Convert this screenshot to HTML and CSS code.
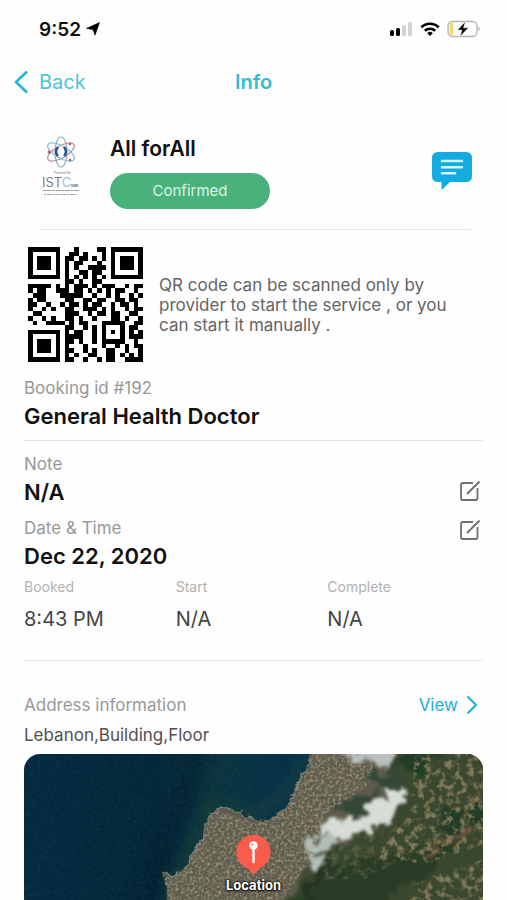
FILE: index.html
```html
<!DOCTYPE html>
<html lang="en">
<head>
    <meta charset="UTF-8">
    <meta name="viewport" content="width=device-width, initial-scale=1.0">
    <title>Info</title>
    <link rel="stylesheet" href="styles.css">
</head>
<body>
    <div class="page">
        <div class="status-bar">
            <div class="status-time">
                <span>9:52</span>
                <svg width="14" height="14" viewBox="0 0 14 14"><path d="M13.5 .5 L9 13.2 L7 7.6 L.4 6.4 Z" fill="#000" stroke="#000" stroke-width=".6"/></svg>
            </div>
            <div class="status-icons">
                <svg width="24" height="16" viewBox="0 0 24 16">
                    <rect x="1" y="9" width="4" height="6" rx="1.5"/>
                    <rect x="7" y="7" width="4" height="8" rx="1.5"/>
                    <rect x="13" y="4" width="4" height="11" rx="1.5" fill="#d2d2d2"/>
                    <rect x="19" y="1" width="4" height="14" rx="1.5" fill="#d2d2d2"/>
                </svg>
                <svg width="20" height="16" viewBox="0 0 20 16" fill="none" stroke="#000" stroke-width="2.6">
                    <path d="M1.3 6.2 A12.5 12.5 0 0 1 18.7 6.2"/>
                    <path d="M4.8 9.8 A7.5 7.5 0 0 1 15.2 9.8"/>
                    <path d="M10 15 L7.2 12.2 A4 4 0 0 1 12.8 12.2 Z" fill="#000" stroke="none"/>
                </svg>
                <svg width="34" height="18" viewBox="0 0 34 18">
                    <rect x="1" y="1.5" width="29" height="15" rx="4.5" fill="#fff" stroke="#b4b4b4" stroke-width="1.3"/>
                    <path d="M6 3 V15 H5 A2.5 2.5 0 0 1 2.5 12.5 V5.5 A2.5 2.5 0 0 1 5 3 Z" fill="#f0dc6e"/>
                    <path d="M31.5 6.5 Q34 9 31.5 11.5 Z" fill="#a8a8a8"/>
                    <path d="M18.5 1.5 L10.5 10 H15 L13 16.5 L21.5 7.8 H16.5 Z" fill="#000" stroke="#fff" stroke-width=".5"/>
                </svg>
            </div>
        </div>

        <nav class="nav-bar">
            <a class="back" href="#">
                <svg width="15" height="24" viewBox="0 0 15 24"><path d="M13 1.5 L2 12 L13 22.5" fill="none" stroke="#22b8d3" stroke-width="2.6"/></svg>
                Back
            </a>
            <h1>Info</h1>
        </nav>

        <header class="provider">
            <svg class="logo" width="38" height="62" viewBox="0 0 38 62">
                <g fill="none" stroke-width="1.2">
                    <ellipse cx="19" cy="16" rx="6" ry="15" stroke="#8aa9c4"/>
                    <ellipse cx="19" cy="16" rx="6" ry="15" stroke="#b7889f" transform="rotate(60 19 16)"/>
                    <ellipse cx="19" cy="16" rx="6" ry="15" stroke="#7fbdcc" transform="rotate(120 19 16)"/>
                    <path d="M16 11 Q12 16 16 20 M22 11 Q26 16 22 20" stroke="#244c91" stroke-width="2.4"/>
                </g>
                <g fill="#c94b60"><circle cx="7" cy="16" r="1.5"/><circle cx="28" cy="8" r="1.3"/><circle cx="28" cy="24" r="1.3"/></g>
                <text x="12" y="38" font-size="3" fill="#777">Powered By</text>
                <text x="0" y="51" font-size="13" fill="#7c7f88">IST<tspan fill="#9ec5d0">C</tspan></text>
                <text x="29" y="51" font-size="3" font-weight="700" fill="#555">SARL</text>
                <path d="M1 54.5 H37" stroke="#9a9aa2" stroke-width="1.2" stroke-dasharray="3 .6 5 .6"/>
                <path d="M2 58.5 H36" stroke="#a5a5ac" stroke-dasharray="2 1 4 .7"/>
            </svg>
            <div class="provider-info">
                <h2>All forAll</h2>
                <span class="status">Confirmed</span>
            </div>
            <button class="chat" aria-label="Chat">
                <svg width="42" height="40" viewBox="0 0 42 40">
                    <path d="M7 1 H35 Q41 1 41 7 V25 Q41 31 35 31 H19 L10.5 39 V31 H7 Q1 31 1 25 V7 Q1 1 7 1 Z" fill="#14acdf"/>
                    <path d="M11 10 H31 M11 16.2 H31 M11 22.3 H24" stroke="#d5f4fc" stroke-width="2.6" stroke-linecap="round"/>
                </svg>
            </button>
        </header>

        <section class="qr-row">
            <svg id="qr" width="115" height="115" viewBox="0 0 25 25" shape-rendering="crispEdges"></svg>
            <p>QR code can be scanned only by provider to start the service , or you can start it manually .</p>
        </section>

        <section class="booking">
            <p class="label">Booking id #192</p>
            <p class="value">General Health Doctor</p>
        </section>

        <section class="details">
            <div class="field">
                <div>
                    <p class="label">Note</p>
                    <p class="value">N/A</p>
                </div>
                <button class="edit edit-low" aria-label="Edit note">
                    <svg width="22" height="22" viewBox="0 0 22 22" fill="none" stroke="#707070" stroke-width="1.8"><path d="M14 3 H4 Q2 3 2 5 V18 Q2 20 4 20 H16.5 Q18.5 20 18.5 18 V8"/><path d="M8 14 L20.5 1.5" stroke-width="2"/></svg>
                </button>
            </div>
            <div class="field">
                <div>
                    <p class="label">Date &amp; Time</p>
                    <p class="value">Dec 22, 2020</p>
                </div>
                <button class="edit" aria-label="Edit date and time">
                    <svg width="22" height="22" viewBox="0 0 22 22" fill="none" stroke="#707070" stroke-width="1.8"><path d="M14 3 H4 Q2 3 2 5 V18 Q2 20 4 20 H16.5 Q18.5 20 18.5 18 V8"/><path d="M8 14 L20.5 1.5" stroke-width="2"/></svg>
                </button>
            </div>
            <dl class="times">
                <div><dt>Booked</dt><dd>8:43 PM</dd></div>
                <div><dt>Start</dt><dd>N/A</dd></div>
                <div><dt>Complete</dt><dd>N/A</dd></div>
            </dl>
        </section>

        <section class="address">
            <div class="address-head">
                <p class="label">Address information</p>
                <a class="view" href="#">View
                    <svg width="12" height="20" viewBox="0 0 12 20"><path d="M1.5 1.5 L10 10 L1.5 18.5" fill="none" stroke="#1eaed0" stroke-width="2"/></svg>
                </a>
            </div>
            <p class="address-text">Lebanon,Building,Floor</p>
        </section>

        <div class="map">
            <svg class="map-image" viewBox="0 0 458 146" preserveAspectRatio="xMidYMin slice" color-interpolation-filters="sRGB">
                <defs>
                    <linearGradient id="sea" x2="1">
                        <stop offset="0" stop-color="#052a40"/>
                        <stop offset=".28" stop-color="#04263a"/>
                        <stop offset=".42" stop-color="#0b343f"/>
                        <stop offset=".58" stop-color="#06304a"/>
                    </linearGradient>
                    <filter id="rough" x="-10%" y="-10%" width="120%" height="120%">
                        <feTurbulence type="fractalNoise" baseFrequency=".13" numOctaves="3" seed="4"/>
                        <feDisplacementMap in="SourceGraphic" scale="9" xChannelSelector="R" yChannelSelector="G"/>
                    </filter>
                    <filter id="patch" x="-20%" y="-20%" width="140%" height="140%">
                        <feTurbulence type="fractalNoise" baseFrequency=".07" numOctaves="4" seed="9"/>
                        <feDisplacementMap in="SourceGraphic" scale="26" xChannelSelector="R" yChannelSelector="G"/>
                        <feGaussianBlur stdDeviation="1.5"/>
                    </filter>
                    <filter id="grain" x="0" y="0" width="100%" height="100%">
                        <feTurbulence type="fractalNoise" baseFrequency=".35" numOctaves="3" seed="2"/>
                        <feColorMatrix values="0 0 0 0 .72  0 0 0 0 .68  0 0 0 0 .56  2.4 0 0 0 -1"/>
                        <feGaussianBlur stdDeviation=".5"/>
                        <feComposite in2="SourceGraphic" operator="in"/>
                    </filter>
                    <filter id="fields" x="0" y="0" width="100%" height="100%">
                        <feTurbulence type="fractalNoise" baseFrequency=".14" numOctaves="4" seed="12"/>
                        <feColorMatrix values="0 0 0 0 .60  0 0 0 0 .54  0 0 0 0 .40  4 0 0 0 -1.9"/>
                        <feGaussianBlur stdDeviation=".6"/>
                        <feComposite in2="SourceGraphic" operator="in"/>
                    </filter>
                    <filter id="seaGrain" x="0" y="0" width="100%" height="100%">
                        <feTurbulence type="fractalNoise" baseFrequency=".3" numOctaves="2" seed="6"/>
                        <feColorMatrix values="0 0 0 0 .16  0 0 0 0 .32  0 0 0 0 .36  1.5 0 0 0 -.6"/>
                    </filter>
                    <filter id="soft" x="-50%" y="-50%" width="200%" height="200%"><feGaussianBlur stdDeviation="7"/></filter>
                    <path id="land" d="M142 150 L142 134 L138 119 L150 121 L163 110 L168 97 L178 87 L179 75 L186 59 L196 53 L216 58 L229 68 L246 66 L261 56 L268 43 L276 23 L284 12 L288 -6 H464 V152 Z"/>
                    <clipPath id="landClip"><use href="#land"/></clipPath>
                </defs>
                <rect width="458" height="146" fill="url(#sea)"/>
                <path d="M175 -5 L120 150" stroke="#03202f" stroke-width="22" filter="url(#soft)" opacity=".6"/>
                <path d="M142 150 L163 100 L186 50 L230 60 L262 40 L284 0" fill="none" stroke="#1c4238" stroke-width="10" filter="url(#soft)" opacity=".8"/>
                <rect width="458" height="146" filter="url(#seaGrain)" opacity=".35"/>
                <use href="#land" fill="#5f5c4e" filter="url(#rough)"/>
                <g clip-path="url(#landClip)">
                    <path d="M368 -10 H475 V160 H255 L285 116 L318 92 L350 74 L380 50 L364 20 Z" fill="#3a482f" filter="url(#patch)"/>
                    <path d="M310 50 L350 38 L354 50 L324 66 Z M340 22 L376 20 L374 34 L345 32 Z" fill="#344838" filter="url(#patch)"/>
                    <path d="M270 150 L300 106 L350 108 L404 88 L430 96 L390 124 L350 150 Z" fill="#283c26" filter="url(#patch)"/>
                    <path d="M376 -5 H415 L400 18 L378 22 Z M410 60 L460 44 V72 L425 82 Z" fill="#223d27" filter="url(#patch)"/>
                    <path d="M404 98 L448 72 M450 36 L438 64" stroke="#79583f" stroke-width="5" filter="url(#patch)"/>
                    <path d="M142 150 L138 119 L163 110 L179 80 L190 55 L229 68 L262 56 L288 -6 H350 L345 30 L300 60 L290 100 L255 150 Z" filter="url(#grain)" opacity=".7"/>
                    <path d="M390 0 H458 V90 L400 110 L350 104 L385 60 Z M385 130 L458 105 V146 H385 Z" filter="url(#fields)" opacity=".75"/>
                    <path d="M290 60 H350 L405 90 L340 125 H285 Z" filter="url(#fields)" opacity=".3"/>
                    <path d="M283 146 L296 110 L310 94" fill="none" stroke="#25291f" stroke-width="8" opacity=".55" filter="url(#patch)"/>
                </g>
                <path d="M138 119 L150 121 L163 110 L168 97 L178 87 L179 75 L186 59 L196 53 L216 58 L229 68 M246 66 L261 56 L268 43 L276 23 L286 5" fill="none" stroke="#a19d8b" stroke-width="1.5" opacity=".65" filter="url(#rough)"/>
                <g filter="url(#patch)">
                    <path d="M322 -6 H375 L368 8 L352 15 L343 6 L326 3 Z" fill="#b9c0bd"/>
                    <path d="M360 32 L378 32 L379 54 L366 57 L367 67 L347 70 L340 79 L310 85 L296 80 L300 66 L324 63 L340 60 L348 50 L362 44 Z" fill="#d6ddd6"/>
                    <path d="M279 83 L308 83 L312 93 L282 94 Z M278 98 L305 98 L300 109 L285 111 Z" fill="#b2beb8"/>
                </g>
            </svg>
            <div class="marker">
                <svg width="36" height="42" viewBox="0 0 36 42">
                    <path d="M18 1 A17 17 0 0 1 25.5 33.3 Q21.5 35.5 18 41 Q14.5 35.5 10.5 33.3 A17 17 0 0 1 18 1 Z" fill="#fb5b4b"/>
                    <path d="M18 14 V28" stroke="#fff" stroke-width="2.4" stroke-linecap="round"/>
                    <circle cx="18" cy="11.5" r="4.2" fill="#fff"/>
                    <circle cx="17" cy="10.5" r="1.3" fill="#fb9b8f"/>
                </svg>
                <span>Location</span>
            </div>
        </div>
    </div>
    <script>
        // one string per row of the code, # is a dark module
        const rows = [
            '#######...#....##.#######',
            '#.....#..##.#...#.#.....#',
            '#.###.#.##.##.#.#.#.###.#',
            '#.###.#.#.##...#..#.###.#',
            '#.###.#.#.#..####.#.###.#',
            '#.....#.#..##.##..#.....#',
            '#######.#.#.#.#.#.#######',
            '........##.#..##.........',
            '#####.#.#.###.#.###..#.##',
            '#.##..###.##.#.#.#.##..#.',
            '.###...#####..#..#.#..#.#',
            '#.##....##..##.##..##.##.',
            '##..#..#.##.#.##..#.##.#.',
            '#..#.#..##..###.#.#..#.##',
            '.##.....###..#.##.##..##.',
            '#..#.#..##.#..#...##.#..#',
            '.#..####.#.##...#####..##',
            '........##..#.#.#...#.##.',
            '#######.#.##..#.#.#.#.#.#',
            '#.....#.####..#.#...#.###',
            '#.###.#.##.#..#.#####..#.',
            '#.###.#.#...#...#..#.#.##',
            '#.###.#.##..#.#..##..#..#',
            '#.....#.#.#..##..##.#.#.#',
            '#######.##..#..#.##..####'
        ];

        let path = '';
        rows.forEach((row, y) => {
            [...row].forEach((cell, x) => {
                if (cell === '#') path += `M${x} ${y}h1v1h-1z`;
            });
        });
        document.getElementById('qr').innerHTML = `<path d="${path}"/>`;
    </script>
</body>
</html>
```
FILE: styles.css
```css
* {
    box-sizing: border-box;
}

body {
    margin: 0;
    background-color: #fefefe;
    font-family: Inter, 'Liberation Sans', sans-serif;
    color: #111;
}

h1, h2, p, dl, dd {
    margin: 0;
}

svg {
    display: block;
    flex-shrink: 0;
}

a {
    text-decoration: none;
}

button {
    border: none;
    background: none;
    padding: 0;
    cursor: pointer;
}

.page {
    display: flex;
    flex-direction: column;
    min-height: 100vh;
    padding: 0 24px;
}

.status-bar {
    display: flex;
    justify-content: space-between;
    align-items: center;
    height: 58px;
    padding: 0 2px 0 15px;
}

.status-time {
    display: flex;
    align-items: center;
    gap: 5px;
    font-size: 19px;
    font-weight: 600;
}

.status-icons {
    display: flex;
    align-items: center;
    gap: 7px;
}

.nav-bar {
    display: grid;
    grid-template-columns: 1fr auto 1fr;
    align-items: center;
    height: 48px;
    margin: 0 -10px;
}

.back {
    display: flex;
    align-items: center;
    gap: 10px;
    font-size: 20px;
    color: #4cc5d6;
}

.nav-bar h1 {
    font-size: 20px;
    font-weight: 600;
    color: #35bcd2;
}

.provider {
    display: flex;
    align-items: center;
    margin: 0 12px 0 16px;
    padding: 30px 0 20px;
    border-bottom: 1px solid #e6e6e6;
}

.logo {
    align-self: flex-start;
    margin-left: 2px;
}

.provider-info {
    flex: 1;
    margin-left: 30px;
}

.provider-info h2 {
    font-size: 21px;
    font-weight: 600;
    line-height: 26px;
    margin-bottom: 11px;
}

.status {
    display: block;
    width: 160px;
    border-radius: 18px;
    background-color: #49b27c;
    color: #dcf5e6;
    font-size: 15px;
    line-height: 36px;
    text-align: center;
}

.chat {
    margin: 0 -2px 4px 0;
}

.qr-row {
    display: flex;
    align-items: center;
    gap: 16px;
    padding: 17px 16px 14px 4px;
}

.qr-row p {
    font-size: 17px;
    line-height: 20px;
    color: #646464;
}

.label {
    font-size: 17px;
    line-height: 24px;
    color: #989898;
}

.value {
    font-size: 22px;
    font-weight: 600;
    line-height: 32px;
}

.booking {
    padding-bottom: 8px;
    border-bottom: 1px solid #e4e4e4;
}

.details {
    padding: 11px 0 27px;
    border-bottom: 1px solid #e4e4e4;
}

.field {
    display: flex;
    justify-content: space-between;
    align-items: flex-start;
    margin-bottom: 8px;
    padding-right: 2px;
}

.field:nth-child(2) {
    margin-bottom: 5px;
}

.edit {
    margin-top: 3px;
}

.edit-low {
    align-self: flex-end;
    margin-bottom: 6px;
}

.times {
    display: grid;
    grid-template-columns: repeat(3, 1fr);
    margin-right: 4px;
}

.times dt {
    font-size: 14px;
    line-height: 20px;
    color: #b0b0b0;
}

.times dd {
    margin-top: 8px;
    font-size: 20px;
    line-height: 28px;
    color: #444;
}

.address-head {
    display: flex;
    justify-content: space-between;
    align-items: center;
    padding: 32px 5px 6px 0;
}

.view {
    display: flex;
    align-items: center;
    gap: 8px;
    font-size: 17px;
    line-height: 24px;
    color: #1eaed0;
}

.address-text {
    font-size: 17px;
    line-height: 24px;
    color: #505050;
}

.map {
    position: relative;
    flex: 1;
    min-height: 146px;
    margin-top: 7px;
    border-radius: 16px 16px 0 0;
    overflow: hidden;
}

.map-image {
    position: absolute;
    width: 100%;
    height: 100%;
}

.marker {
    position: absolute;
    top: 80px;
    left: 50%;
    display: flex;
    flex-direction: column;
    align-items: center;
    transform: translateX(-50%);
}

.marker span {
    font-size: 13px;
    font-weight: 700;
    line-height: 18px;
    color: #fff;
    text-shadow: 0 0 2px #000, 0 0 2px #000, 0 1px 3px #000;
}
```
